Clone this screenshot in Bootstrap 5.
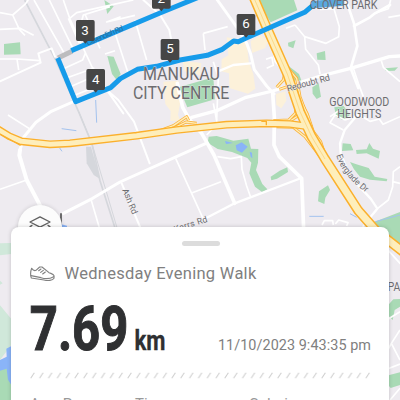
<!DOCTYPE html>
<html lang="en">
<head>
  <meta charset="UTF-8">
  <title>Wednesday Evening Walk</title>
  <meta name="viewport" content="width=device-width, initial-scale=1">
  <link href="https://cdn.jsdelivr.net/npm/bootstrap@5.3.0/dist/css/bootstrap.min.css" rel="stylesheet">
  <style>
    body {
      font-family: Roboto, "Liberation Sans", sans-serif;
      background: #eeebf0;
      overflow: hidden;
    }
    .walk-screen {
      width: 400px;
      height: 400px;
    }
    .map-canvas {
      top: 0;
      left: 0;
      width: 400px;
      height: 400px;
    }
    .map-space {
      height: 227px;
      flex: none;
    }
    .layers-btn {
      left: 18px;
      top: 205px;
      width: 44px;
      height: 44px;
      background: #fcfcfc;
      box-shadow: 0 0 4px rgba(0, 0, 0, .15);
      padding-top: 10px;
    }
    .sheet {
      margin: 0 11px;
      padding: 14px 18px 0 19px;
      background: #fff;
      border-radius: 8px 8px 0 0;
      box-shadow: 0 0 4px rgba(0, 0, 0, .18);
      color: #808080;
    }
    .grabber {
      width: 38px;
      height: 5px;
      background: #dcdcdc;
    }
    .walk-title {
      height: 24px;
      margin-top: 16px;
    }
    .walk-title span {
      font-size: 16.5px;
      line-height: 24px;
      letter-spacing: .27px;
      margin-left: 9.6px;
    }
    .walk-figures {
      height: 66px;
    }
    .distance {
      color: #2f3032;
    }
    .walk-date {
      font-size: 14.4px;
      line-height: 20px;
      letter-spacing: .06px;
      margin-top: 50px;
    }
    .hatch-rule {
      height: 7px;
      margin-top: 20px;
    }
    .stat-labels {
      font-size: 15px;
      line-height: 20px;
      color: #999;
      margin-top: 15px;
    }
    .stat-pace {
      width: 105px;
    }
    .stat-time {
      width: 114px;
    }
  </style>
</head>
<body>

<div class="walk-screen position-relative overflow-hidden d-flex flex-column">

  <!-- Map, drawn at three units per pixel -->
  <svg class="map-canvas position-absolute" viewBox="0 0 1200 1200">
    <rect width="1200" height="1200" fill="#eeebf0"/>

    <!-- Parks -->
    <g fill="#a9dab5">
      <path d="M12 132L60 127L62 163L12 164Z"/>
      <path d="M313 0L341 19L322 42Z"/>
      <path d="M322 168L341 170L362 222L350 240L336 222Z"/>
      <path d="M770 0H882L892 31L812 67Z"/>
      <path d="M536 262L640 232L645 298L562 322Z"/>
      <path d="M864 128L887 121L880 145L865 139Z"/>
      <path d="M950 160L975 153L977 180L952 179Z"/>
      <path d="M862 195L897 222L905 243L880 240Z"/>
      <path d="M937 262L956 250L963 290L950 297L938 281Z"/>
      <path d="M1155 205L1194 202L1184 212L1157 213Z"/>
      <path d="M1003 322L1031 318L1050 345L1028 360L1008 350Z"/>
      <path d="M626 410L650 408L700 422L745 416L753 446L775 447L774 488L768 510L787 552L802 568L787 577L765 560L748 520L754 488L742 474L696 456L653 447L623 428Z"/>
      <path d="M812 530L839 512L862 502L864 516L831 536L814 541Z"/>
      <path d="M957 574L984 556L990 570L976 593L973 612L954 604Z"/>
      <path d="M1028 430L1052 432L1060 451L1026 453Z"/>
      <path d="M1068 450L1100 448L1108 429L1119 446L1140 453L1136 476L1100 460L1070 462Z"/>
      <path d="M1050 486L1069 493L1106 504L1124 530L1162 537L1160 544L1110 539L1080 530L1062 508Z"/>
      <path d="M1122 666L1200 636V750L1146 700Z"/>
      <path d="M1160 920L1180 898L1200 897V920L1184 930L1178 960L1162 944Z"/>
      <path d="M1160 1127L1200 1117V1155L1172 1164L1160 1150Z"/>
      <path d="M0 1110L22 1104L34 1140V1200H0Z"/>
    </g>
    <path d="M0 730L34 729V762L0 766ZM0 842L8 850L0 854ZM0 916L34 957V1035L0 1080Z" fill="#d0e8da"/>
    <path d="M0 1080L20 1070L19 1046L34 1038V1155L24 1139L20 1106L0 1112Z" fill="#8ab4f8"/>
    <g fill="#8ab4f8">
      <path d="M707 436L725 427L743 440L726 458L710 451Z"/>
      <path d="M749 455L756 458L757 475L752 470ZM675 423L699 429L678 432Z"/>
      <path d="M184 673L201 677V684H184Z"/>
    </g>
    <g fill="none" stroke="#a3c2ee" stroke-width="3">
      <path d="M287 300L290 368"/>
      <path d="M185 386L229 392M179 444L186 454M928 649H971M1050 641L1070 652M1126 665L1200 645"/>
    </g>

    <!-- Commercial blocks -->
    <g fill="#fcf1da">
      <path d="M490 245L536 242L541 305L534 345L541 363L511 363L512 333L496 312Z"/>
      <path d="M548 185L590 187L604 190L600 226L553 214Z"/>
      <path d="M665 178L685 166L680 112L740 122L746 184L760 222L766 266L744 281L688 264L687 220L664 214Z"/>
      <path d="M752 123L783 106L804 123L796 144L756 159Z"/>
      <path d="M828 282L856 274L859 302L844 325L829 315Z"/>
    </g>

    <!-- Railway -->
    <g fill="none" stroke="#d5d7dc">
      <path d="M74 0L168 182L238 340L276 432L300 542L347 690" stroke-width="5"/>
      <path d="M236 335L275 428L322 585L353 690" stroke-width="3"/>
    </g>
    <path d="M258 440L273 440L300 537L281 525L260 490Z" fill="#d5d7dc"/>

    <!-- Minor streets -->
    <g fill="none" stroke="#fff" stroke-width="5" stroke-linejoin="round">
      <path d="M102 0L195 164M148 0L219 146M0 38L38 45L74 14L85 0M38 45L58 88L75 106M0 88L60 85L101 106M0 177L51 177L119 182M51 177L56 210"/>
      <path d="M190 0L209 55L256 158L300 252M209 55L230 38L400 0M233 108L250 45L330 20M256 45L300 145M205 55L238 130M184 209L248 180L256 160M191 237L283 204M204 263L290 226M218 288L314 250"/>
      <path d="M362 50L320 66L405 46M344 95L383 215M315 162L345 152M405 60L440 180M640 185L655 232L650 360M610 100L615 150M610 100L683 80M560 0L620 -20"/>
      <path d="M640 310L652 372L620 405M0 568L80 540M24 345L88 386M272 595L300 690M527 475L609 655M577 578L663 545M652 470L692 476L724 470L726 508L740 558L752 592"/>
      <path d="M820 92L814 122L825 184L858 222M885 75L914 110L917 148L955 195L960 222M914 110L978 130L1016 110L1018 80L1002 26M1002 26L960 28M858 85L885 75M1125 40L1165 26L1172 0M1165 52L1200 46"/>
      <path d="M798 178L816 172L820 196L800 205M1144 182L1150 202L1200 245M1060 205L1075 250L1090 290M990 350L1020 330M1035 360L1080 345L1110 364L1138 357L1149 373L1200 350M1035 360L1005 345L990 368L1030 390"/>
      <path d="M1200 500L1180 515L1178 560L1165 600L1132 626L1088 680M1178 545L1200 550M966 675L973 662L998 662L1000 675M1006 672L1016 660L1044 668L1040 678M1160 960L1200 935M1160 1056L1174 1030L1200 990M1174 1030L1200 1080M1160 1108L1200 1092M1170 1200L1200 1165"/>
    </g>

    <!-- Main streets -->
    <g fill="none" stroke="#fff" stroke-width="9" stroke-linejoin="round" stroke-linecap="round">
      <path d="M0 244L122 188L115 160L155 145L165 170" stroke-width="6"/>
      <path d="M300 252L355 300L402 365L449 490M296 235L370 340" stroke-width="6"/>
      <path d="M218 306L154 334L108 367L72 410L60 450"/>
      <path d="M60 450L58 466L80 540L122 620" stroke-width="12"/>
      <path d="M190 640L278 595L360 546L618 430"/>
      <path d="M365 550L424 690" stroke-width="6"/>
      <path d="M430 0L480 44L508 90L524 175" stroke-width="6"/>
      <path d="M652 0L695 60L708 78L740 130L752 162L763 209L800 258L822 282" stroke-width="9"/>
      <path d="M532 250L548 322L570 361L605 400L642 465L704 610" stroke-width="11"/>
      <path d="M575 352L650 332L738 292L818 273L962 228L1052 205L1168 170L1200 168" stroke-width="10"/>
      <path d="M660 212L700 195L752 190" stroke-width="7"/>
      <path d="M818 280L823 350L822 435L838 470L905 535L911 690" stroke-width="11"/>
      <path d="M904 534L704 610L597 665" stroke-width="7"/>
      <path d="M1038 0L1062 70L1072 138L1052 205L1075 264M1062 78L1110 52L1125 40L1170 15" stroke-width="8"/>
      <path d="M1072 345L1034 390L1020 430L1022 460L1050 530L1112 596L1132 626L1102 662" stroke-width="7"/>
      <path d="M1160 746L1200 790" stroke-width="5"/>
    </g>

    <!-- Motorways -->
    <g fill="none" stroke-linejoin="round">
      <g stroke="#fbb33a" stroke-width="9">
        <path d="M480 392L520 377L560 350L566 362M520 385L558 366L590 370"/>
        <path d="M830 262L850 240L855 215M838 268L872 256L880 240M860 200L890 235L900 290L935 384"/>
        <path d="M820 362L866 360L886 340L889 315M830 380L880 382L915 410L970 482M866 366L905 340M870 376L915 378M900 300L922 342L940 395L962 425L980 480"/>
      </g>
      <g stroke="#feeebb" stroke-width="4">
        <path d="M480 392L520 377L560 350L566 362M520 385L558 366L590 370"/>
        <path d="M830 262L850 240L855 215M838 268L872 256L880 240M860 200L890 235L900 290L935 384"/>
        <path d="M820 362L866 360L886 340L889 315M830 380L880 382L915 410L970 482M866 366L905 340M870 376L915 378M900 300L922 342L940 395L962 425L980 480"/>
      </g>
      <path d="M-6 388L28 409L64 424L150 433L210 430L410 407L530 390L680 374L800 370L870 372L915 378" stroke="#fbb02c" stroke-width="23"/>
      <path d="M762 -6L799 80L862 222L900 335L935 410L975 477L1075 632L1128 692L1210 756" stroke="#fbb02c" stroke-width="30"/>
      <path d="M-6 388L28 409L64 424L150 433L210 430L410 407L530 390L680 374L800 370L870 372L920 379" stroke="#feeebb" stroke-width="15"/>
      <path d="M762 -6L799 80L862 222L900 335L935 410L975 477L1075 632L1128 692L1210 756" stroke="#feeebb" stroke-width="21"/>
      <path d="M762 -6L799 80L862 222L900 335L935 410L975 477" stroke="#fcd98a" stroke-width="3"/>
      <path d="M0 402L62 436M784 364H799V376" stroke="#fbb02c" stroke-width="4"/>
    </g>

    <!-- Walked route, with the paused stretch in grey -->
    <path d="M174 174L216 154" stroke="#bcbcbe" stroke-width="15"/>
    <g fill="none" stroke="#169bea" stroke-width="15" stroke-linejoin="round">
      <path d="M214 152L300 115L480 39L600 -10"/>
      <path d="M173 174L227 305L332 263L361 236L412 208L470 199L540 180L622 166L665 149L701 123L715 125L737 115L914 37L935 19L1010 0"/>
    </g>
    <path d="M935 14L1030 6" stroke="#5aa9df" stroke-width="22"/>

    <!-- Place names -->
    <g font-family="Roboto, 'Liberation Sans', sans-serif" fill="#6d6c70">
      <g stroke="#f3f1f4" stroke-width="3" stroke-opacity=".7" paint-order="stroke" stroke-linejoin="round">
        <text x="429" y="239" font-size="56" textLength="231" lengthAdjust="spacingAndGlyphs">MANUKAU</text>
        <text x="399" y="296" font-size="56" textLength="289" lengthAdjust="spacingAndGlyphs">CITY CENTRE</text>
        <text x="988" y="319" font-size="41" textLength="180" lengthAdjust="spacingAndGlyphs">GOODWOOD</text>
        <text x="1012" y="355" font-size="41" textLength="132" lengthAdjust="spacingAndGlyphs">HEIGHTS</text>
        <text x="1163" y="874" font-size="41" textLength="76" lengthAdjust="spacingAndGlyphs">PARK</text>
        <text transform="translate(863 275) rotate(-15)" font-size="27" textLength="133">Redoubt Rd</text>
        <text transform="translate(367 570) rotate(68)" font-size="26" textLength="80">Ash Rd</text>
        <text transform="translate(525 697) rotate(-18)" font-size="26" textLength="104">Kerrs Rd</text>
        <path id="everglade" d="M1009 466Q1026 526 1101 580" fill="none" stroke="none"/>
        <text font-size="26"><textPath href="#everglade" textLength="145">Everglade Dr</textPath></text>
      </g>
      <text x="929" y="27" font-size="39" textLength="203" lengthAdjust="spacingAndGlyphs">CLOVER PARK</text>
      <text transform="translate(263 137) rotate(-23)" font-size="24" textLength="118" fill="#286f9f">Cavendish Rd</text>
    </g>
    <path d="M183 640V674" stroke="#555" stroke-width="5"/>

    <!-- Kilometre markers -->
    <g fill="#464646">
      <path id="pin" d="M232 60H279Q284 60 284 65V118Q284 123 279 123H263L256 131L249 123H233Q228 123 228 118V65Q228 60 233 60Z"/>
      <use href="#pin" x="31" y="147"/>
      <use href="#pin" x="254" y="57"/>
      <use href="#pin" x="482" y="-18"/>
      <use href="#pin" x="228" y="-97"/>
    </g>
    <g font-family="Roboto, 'Liberation Sans', sans-serif" font-size="40" fill="#fff" text-anchor="middle">
      <text x="255" y="105">3</text>
      <text x="287" y="251">4</text>
      <text x="510" y="160">5</text>
      <text x="738" y="85">6</text>
      <text x="484" y="8">2</text>
    </g>
  </svg>

  <div class="map-space"></div>

  <!-- Layers button, partly under the sheet -->
  <div class="layers-btn position-absolute rounded-circle d-flex justify-content-center">
    <svg width="24" height="24" viewBox="0 0 24 24" fill="none" stroke="#606060" stroke-width="1.3" stroke-linejoin="round">
      <path d="M2 7L12 1.8L22 7L12 12.2Z"/>
      <path d="M4.5 10L2 11.5L12 17L22 11.5L19.5 10"/>
    </svg>
  </div>

  <!-- Activity sheet -->
  <div class="sheet position-relative flex-grow-1">
    <div class="grabber rounded-pill mx-auto"></div>

    <div class="walk-title d-flex align-items-center">
      <svg width="25" height="17" viewBox="90 796 75 51" fill="none" stroke="#808080" stroke-width="3.4" stroke-linecap="round" stroke-linejoin="round">
        <path d="M95 803C99 809 103 811 108 809L119 799L126 799L147 816C153 819 160 819 162 825V833C158 840 143 841 132 838L94 832C91 823 91 813 95 803Z"/>
        <path d="M93 825L123 831C137 836 151 834 161 828"/>
        <path d="M116 810L123 805M122 815L130 809M128 820L136 814"/>
      </svg>
      <span>Wednesday Evening Walk</span>
    </div>

    <div class="walk-figures d-flex justify-content-between">
      <svg class="distance" width="140" height="66" fill="currentColor" stroke="currentColor" font-weight="700">
        <text x="-.2" y="63.5" font-size="62" stroke-width="1.1" textLength="98.5" lengthAdjust="spacingAndGlyphs">7.69</text>
        <text x="104.5" y="63.7" font-size="27" stroke-width=".3" textLength="31" lengthAdjust="spacingAndGlyphs">km</text>
      </svg>
      <div class="walk-date text-nowrap">11/10/2023 9:43:35 pm</div>
    </div>

    <svg class="hatch-rule d-block w-100">
      <defs>
        <pattern id="hatch" width="8.82" height="7" patternUnits="userSpaceOnUse">
          <path d="M.7 6.2L4.3 .8" stroke="#cfcfcf" stroke-width="1.1"/>
        </pattern>
      </defs>
      <rect width="341" height="7" fill="url(#hatch)"/>
    </svg>

    <div class="stat-labels d-flex">
      <div class="stat-pace">Avg. Pace</div>
      <div class="stat-time">Time</div>
      <div>Calories</div>
    </div>
  </div>
</div>

<script src="https://cdn.jsdelivr.net/npm/bootstrap@5.3.0/dist/js/bootstrap.bundle.min.js"></script>
</body>
</html>
